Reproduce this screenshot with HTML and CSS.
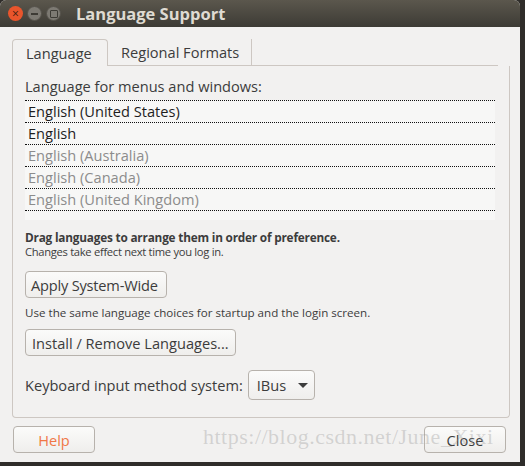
FILE: index.html
```html
<!DOCTYPE html>
<html lang="en">
<head>
    <meta charset="UTF-8">
    <title>Language Support</title>
    <link rel="stylesheet" href="styles.css">
</head>
<body>
    <div class="window">
        <div class="titlebar">
            <div class="win-buttons">
                <span class="wb wb-close">&times;</span>
                <span class="wb wb-min"><i class="min-bar"></i></span>
                <span class="wb wb-max"><i class="max-box"></i></span>
            </div>
            <div class="title">Language Support</div>
        </div>
        <div class="content">
            <div class="tabs">
                <div class="tab active">Language</div>
                <div class="tab">Regional Formats</div>
                <div class="tab-fill"></div>
            </div>
            <div class="frame">
                <div class="label">Language for menus and windows:</div>
                <div class="lang-list">
                    <div class="lang-row strong">English (United States)</div>
                    <div class="lang-row strong">English</div>
                    <div class="lang-row dim">English (Australia)</div>
                    <div class="lang-row dim">English (Canada)</div>
                    <div class="lang-row dim">English (United Kingdom)</div>
                </div>
                <div class="hint">
                    <b>Drag languages to arrange them in order of preference.</b><br>
                    <span class="hint-sub">Changes take effect next time you log in.</span>
                </div>
                <button class="btn btn-apply">Apply System-Wide</button>
                <div class="note">Use the same language choices for startup and the login screen.</div>
                <button class="btn btn-install">Install / Remove Languages...</button>
                <div class="kbd-row">
                    <span>Keyboard input method system:</span>
                    <button class="btn combo">IBus <span class="arrow"></span></button>
                </div>
            </div>
            <div class="actions">
                <button class="btn btn-help">Help</button>
                <button class="btn btn-close">Close</button>
            </div>
            <div class="watermark">https://blog.csdn.net/June_Xixi</div>
        </div>
    </div>
</body>
</html>
```

FILE: styles.css
```css
body {
    margin: 0;
    width: 525px;
    height: 466px;
    overflow: hidden;
    background: #2f2d2a;
    font-family: "Open Sans", "DejaVu Sans", sans-serif;
    font-size: 14.6px;
    color: #3c3c3c;
}
.window {
    width: 520px;
    height: 462px;
    background: #f2f1f0;
    border-radius: 6px 6px 0 0;
    overflow: hidden;
    display: flex;
    flex-direction: column;
}
.titlebar {
    height: 27px;
    background: linear-gradient(#5b574d, #3d3b35);
    display: flex;
    align-items: center;
    padding-left: 8px;
}
.win-buttons {
    display: flex;
    gap: 4px;
}
.wb {
    width: 15px;
    height: 15px;
    border-radius: 50%;
    display: flex;
    align-items: center;
    justify-content: center;
    box-sizing: border-box;
}
.wb-close {
    background: #e9552c;
    color: #3b1d10;
    font-size: 12px;
    line-height: 1;
}
.wb-min, .wb-max {
    background: #7d7a73;
    border: 1px solid #55524b;
}
.min-bar {
    width: 7px;
    height: 2px;
    background: #3d3b35;
}
.max-box {
    width: 6px;
    height: 6px;
    border: 1px solid #3d3b35;
    border-radius: 1px;
}
.title {
    margin-left: 15px;
    font-weight: bold;
    font-size: 16.5px;
    color: #dfdbd2;
}
.content {
    flex: 1;
    position: relative;
    padding: 12px 12px 0 12px;
}
.tabs {
    display: flex;
    height: 27px;
}
.tab {
    padding: 3px 12px 0 13px;
    border-bottom: 1px solid #cdc7c2;
    border-right: 1px solid #cdc7c2;
    color: #3c3c3c;
}
.tab.active {
    width: 69px;
    border: 1px solid #cdc7c2;
    border-bottom: none;
    border-radius: 4px 4px 0 0;
    background: #f2f1f0;
}
.tab-fill {
    flex: 1;
    border-bottom: 1px solid #cdc7c2;
    margin-right: 10px;
}
.frame {
    width: 472px;
    height: 341px;
    border: 1px solid #cdc7c2;
    border-top: none;
    border-radius: 0 0 4px 4px;
    padding: 10px 12px 0 12px;
}
.label {
    height: 20px;
}
.lang-list {
    width: 470px;
    height: 119px;
    margin-top: 4px;
    background: #f7f7f6;
    border-top: 1px dotted #111;
}
.lang-row {
    height: 21px;
    line-height: 21px;
    padding-left: 3px;
    border-bottom: 1px dotted #111;
}
.lang-row.strong {
    color: #1e1e1e;
}
.lang-row.dim {
    color: #8c8c8c;
}
.hint {
    margin-top: 10px;
    font-size: 11.2px;
    line-height: 14px;
    color: #3c3c3c;
}
.hint b {
    font-size: 11.8px;
    letter-spacing: -0.2px;
}
.hint-sub {
    letter-spacing: -0.3px;
}
.btn {
    font-family: inherit;
    font-size: 14.6px;
    color: #3c3c3c;
    background: linear-gradient(#fbfbfa, #efeeec);
    border: 1px solid #b7b2ac;
    border-radius: 4px;
    height: 27px;
    padding: 0 6px;
    display: flex;
    align-items: center;
    white-space: nowrap;
}
.btn-apply {
    margin-top: 12px;
    width: 142px;
    padding: 0 5px;
    letter-spacing: -0.2px;
}
.note {
    margin-top: 5px;
    font-size: 11.6px;
    height: 20px;
    line-height: 20px;
}
.btn-install {
    margin-top: 6px;
    width: 211px;
}
.kbd-row {
    margin-top: 14px;
    display: flex;
    align-items: center;
    gap: 5px;
}
.combo {
    height: 30px;
    width: 67px;
    padding-left: 8px;
    gap: 12px;
}
.arrow {
    width: 0;
    height: 0;
    border-left: 5px solid transparent;
    border-right: 5px solid transparent;
    border-top: 5px solid #3c3c3c;
}
.actions {
    margin-top: 8px;
    display: flex;
    justify-content: space-between;
    padding-left: 1px;
    padding-right: 2px;
}
.btn-help {
    width: 82px;
    justify-content: center;
    color: #f07746;
}
.btn-close {
    width: 82px;
    justify-content: center;
}
.watermark {
    position: absolute;
    left: 203px;
    top: 397px;
    font-family: "Liberation Serif", serif;
    font-size: 22px;
    color: rgba(150, 150, 150, 0.35);
    letter-spacing: 0.5px;
    white-space: nowrap;
}
```
